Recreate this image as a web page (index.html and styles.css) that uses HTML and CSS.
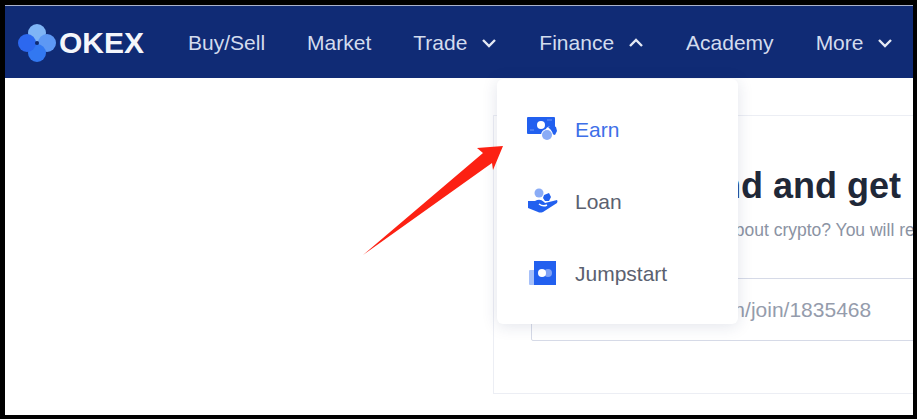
FILE: index.html
```html
<!DOCTYPE html>
<html lang="en">
<head>
    <meta charset="UTF-8">
    <meta name="viewport" content="width=device-width, initial-scale=1.0">
    <title>OKEx Finance menu</title>
    <link rel="stylesheet" href="styles.css">
</head>
<body>
    <div class="frame">
        <header class="nav">
            <a class="logo">
                <svg class="logo-mark" width="40" height="40" viewBox="0 0 40 40">
                    <circle cx="18" cy="10" r="9" fill="#7fb5f6"/>
                    <circle cx="28" cy="20" r="9" fill="#5d98f4"/>
                    <circle cx="18" cy="30" r="9" fill="#3278f1"/>
                    <circle cx="8" cy="20" r="9" fill="#2c68ef"/>
                    <circle cx="18" cy="20" r="2" fill="#0f2a70"/>
                </svg>
                <span class="logo-text">OKEX</span>
            </a>
            <a class="nav-item">Buy/Sell</a>
            <a class="nav-item">Market</a>
            <a class="nav-item">Trade
                <svg class="chevron" width="16" height="10" viewBox="0 0 16 10"><path d="M2 2l6 6 6-6"/></svg>
            </a>
            <a class="nav-item">Finance
                <svg class="chevron" width="16" height="10" viewBox="0 0 16 10"><path d="M2 8l6-6 6 6"/></svg>
            </a>
            <a class="nav-item">Academy</a>
            <a class="nav-item">More
                <svg class="chevron" width="16" height="10" viewBox="0 0 16 10"><path d="M2 2l6 6 6-6"/></svg>
            </a>
        </header>

        <main class="content">
            <section class="card">
                <h2 class="card-title">Refer a friend and get</h2>
                <p class="card-text">Any friend who's curious about crypto? You will receive</p>
                <div class="link-box">https://www.okex.com/join/1835468</div>
            </section>
        </main>

        <ul class="menu">
            <li class="menu-item active">
                <svg class="menu-icon" width="32" height="32" viewBox="0 0 32 32">
                    <rect x="1" y="3" width="28" height="17" rx="1" fill="#2260ef"/>
                    <path d="M21 6h5M4 16h4" stroke="#6f95f5" stroke-width="1"/>
                    <circle cx="15" cy="11" r="4" fill="#fff"/>
                    <circle cx="25" cy="18" r="6" fill="#fff"/>
                    <path d="M22 13l4-2 4 2 1 4-2 4-3-1-1-4z" fill="#2260ef"/>
                    <circle cx="21" cy="21" r="6" fill="#fff"/>
                    <circle cx="21" cy="21" r="5" fill="#8aacf6"/>
                </svg>
                Earn
            </li>
            <li class="menu-item">
                <svg class="menu-icon" width="32" height="32" viewBox="0 0 32 32">
                    <circle cx="13" cy="7" r="4.5" fill="#8aacf6"/>
                    <path d="M18 9l5-2 2 4-2 4-4 0-2-3z" fill="#2260ef"/>
                    <path d="M2 15h7q5-3 9 1l1 1 12-3q1 1 0 3l-14 9q-3 1-5 0l-10-4z" fill="#2260ef"/>
                    <path d="M13 18q4 3 8 1" fill="none" stroke="#fff" stroke-width="1.5"/>
                </svg>
                Loan
            </li>
            <li class="menu-item">
                <svg class="menu-icon" width="32" height="32" viewBox="0 0 32 32">
                    <rect x="3" y="12" width="6" height="15" rx="1" fill="#a6c0f9"/>
                    <rect x="8" y="3" width="22" height="24" fill="#2260ef"/>
                    <circle cx="22" cy="15" r="4" fill="#7fa2f5"/>
                    <circle cx="16" cy="15" r="4" fill="#fff"/>
                </svg>
                Jumpstart
            </li>
        </ul>

        <svg class="arrow" width="160" height="125" viewBox="0 0 160 125">
            <path d="M4 116L124 14 118 9 144 7 134 31 133 24z" fill="#fc2113"/>
        </svg>
    </div>
</body>
</html>
```

FILE: styles.css
```css
* { box-sizing: border-box; }
html, body { margin: 0; padding: 0; }
body { font-family: "Liberation Sans", Arial, sans-serif; background: #000; }

.frame { position: relative; width: 917px; height: 419px; border: solid #000; border-width: 5px 4px 4px 5px; background: #fff; overflow: hidden; }

.nav { display: flex; align-items: center; gap: 42px; height: 73px; padding: 2px 0 0 14px; background: #102b75; border-top: 1px solid #aab3cc; white-space: nowrap; }
.logo { display: flex; align-items: center; margin-right: 2px; }
.logo-mark { flex: none; overflow: visible; }
.logo-text { color: #f4f6fb; font-size: 30px; font-weight: bold; }
.nav-item { display: flex; align-items: center; gap: 14px; color: #d3dcee; font-size: 21px; }
.chevron { fill: none; stroke: #e4e9f4; stroke-width: 2.4; }

.content { padding: 37px 0 0 488px; }
.card { width: 480px; height: 279px; padding: 49px 0 0 37px; border: 1px solid #eceef4; background: #fff; }
.card-title { margin: 0; color: #1f2838; font-size: 36px; line-height: 42px; font-weight: bold; white-space: nowrap; }
.card-text { margin: 13px 0 0; color: #8b93a3; font-size: 17.5px; line-height: 20px; white-space: nowrap; }
.link-box { display: flex; align-items: center; height: 63px; margin-top: 38px; padding-left: 10px; border: 1px solid #d6dae7; border-radius: 2px; color: #959cac; font-size: 21px; white-space: nowrap; }

.menu { position: absolute; left: 492px; top: 74px; width: 241px; height: 245px; margin: 0; padding: 15px 0 0; list-style: none; background: #fff; border-radius: 6px; box-shadow: 0 2px 16px rgba(30, 50, 100, 0.13); }
.menu-item { display: flex; align-items: center; height: 72px; padding-left: 29px; gap: 17px; color: #5b6170; font-size: 21px; }
.menu-item.active { color: #3e6fe8; }
.menu-icon { flex: none; overflow: visible; }

.arrow { position: absolute; left: 354px; top: 134px; }
```
